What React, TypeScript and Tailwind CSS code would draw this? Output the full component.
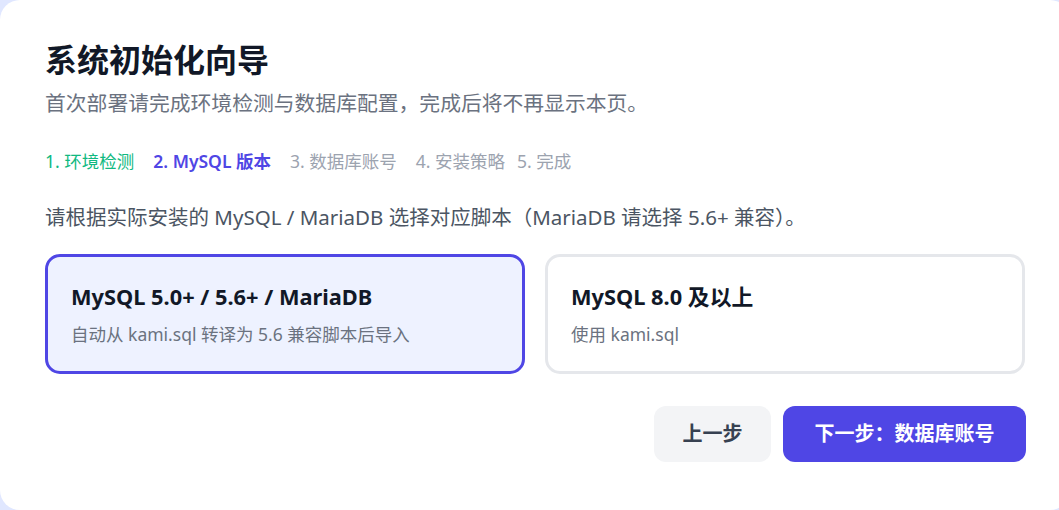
import React from "react";

const font = { fontFamily: '"Noto Sans", "Noto Sans CJK SC", sans-serif' };

export default function App() {
  return (
    <div className="h-[510px] w-[1059px] overflow-hidden bg-[#e0e7ff]" style={font}>
      <div className="h-[510px] w-[1070px] rounded-[20px] bg-white px-[45px] pt-[40px]">
        <h1 className="text-[32px] font-bold leading-[40px] text-[#111827]">系统初始化向导</h1>
        <p className="mt-[8px] text-[20.8px] leading-[30px] text-[#6b7280]">
          首次部署请完成环境检测与数据库配置，完成后将不再显示本页。
        </p>
        <div className="mt-[30px] flex gap-[19px] text-[17.5px] leading-[26px]">
          <span className="text-[#10b981]">1. 环境检测</span>
          <span className="font-semibold text-[#4f46e5]">2. MySQL 版本</span>
          <span className="text-[#9ca3af]">3. 数据库账号</span>
          <span className="text-[#9ca3af]">4. 安装策略</span>
          <span className="-ml-[7px] text-[#9ca3af]">5. 完成</span>
        </div>
        <p className="mt-[28px] text-[20.5px] leading-[30px] text-[#4b5563]">
          请根据实际安装的 MySQL / MariaDB 选择对应脚本（MariaDB 请选择 5.6+ 兼容）。
        </p>
        <div className="mt-[22px] grid w-[980px] grid-cols-2 gap-[20px]">
          <div className="flex h-[120px] flex-col justify-center rounded-[15px] border-[3px] border-[#4f46e5] bg-[#eef2ff] px-[23px]">
            <div className="text-[21.8px] font-bold leading-[30px] text-[#111827]">MySQL 5.0+ / 5.6+ / MariaDB</div>
            <div className="mt-[10px] text-[17.5px] leading-[24px] text-[#6b7280]">自动从 kami.sql 转译为 5.6 兼容脚本后导入</div>
          </div>
          <div className="flex h-[120px] flex-col justify-center rounded-[15px] border-[3px] border-[#e5e7eb] bg-white px-[23px]">
            <div className="text-[21.8px] font-bold leading-[30px] text-[#111827]">MySQL 8.0 及以上</div>
            <div className="mt-[10px] text-[17.5px] leading-[24px] text-[#6b7280]">使用 kami.sql</div>
          </div>
        </div>
        <div className="mt-[32px] flex w-[981px] justify-end gap-[12px]">
          <button className="h-[56px] rounded-[12px] bg-[#f3f4f6] px-[28.5px] text-[20px] font-bold text-[#374151]">上一步</button>
          <button className="h-[56px] rounded-[12px] bg-[#4f46e5] px-[31.5px] text-[20px] font-bold text-white">下一步：数据库账号</button>
        </div>
      </div>
    </div>
  );
}
